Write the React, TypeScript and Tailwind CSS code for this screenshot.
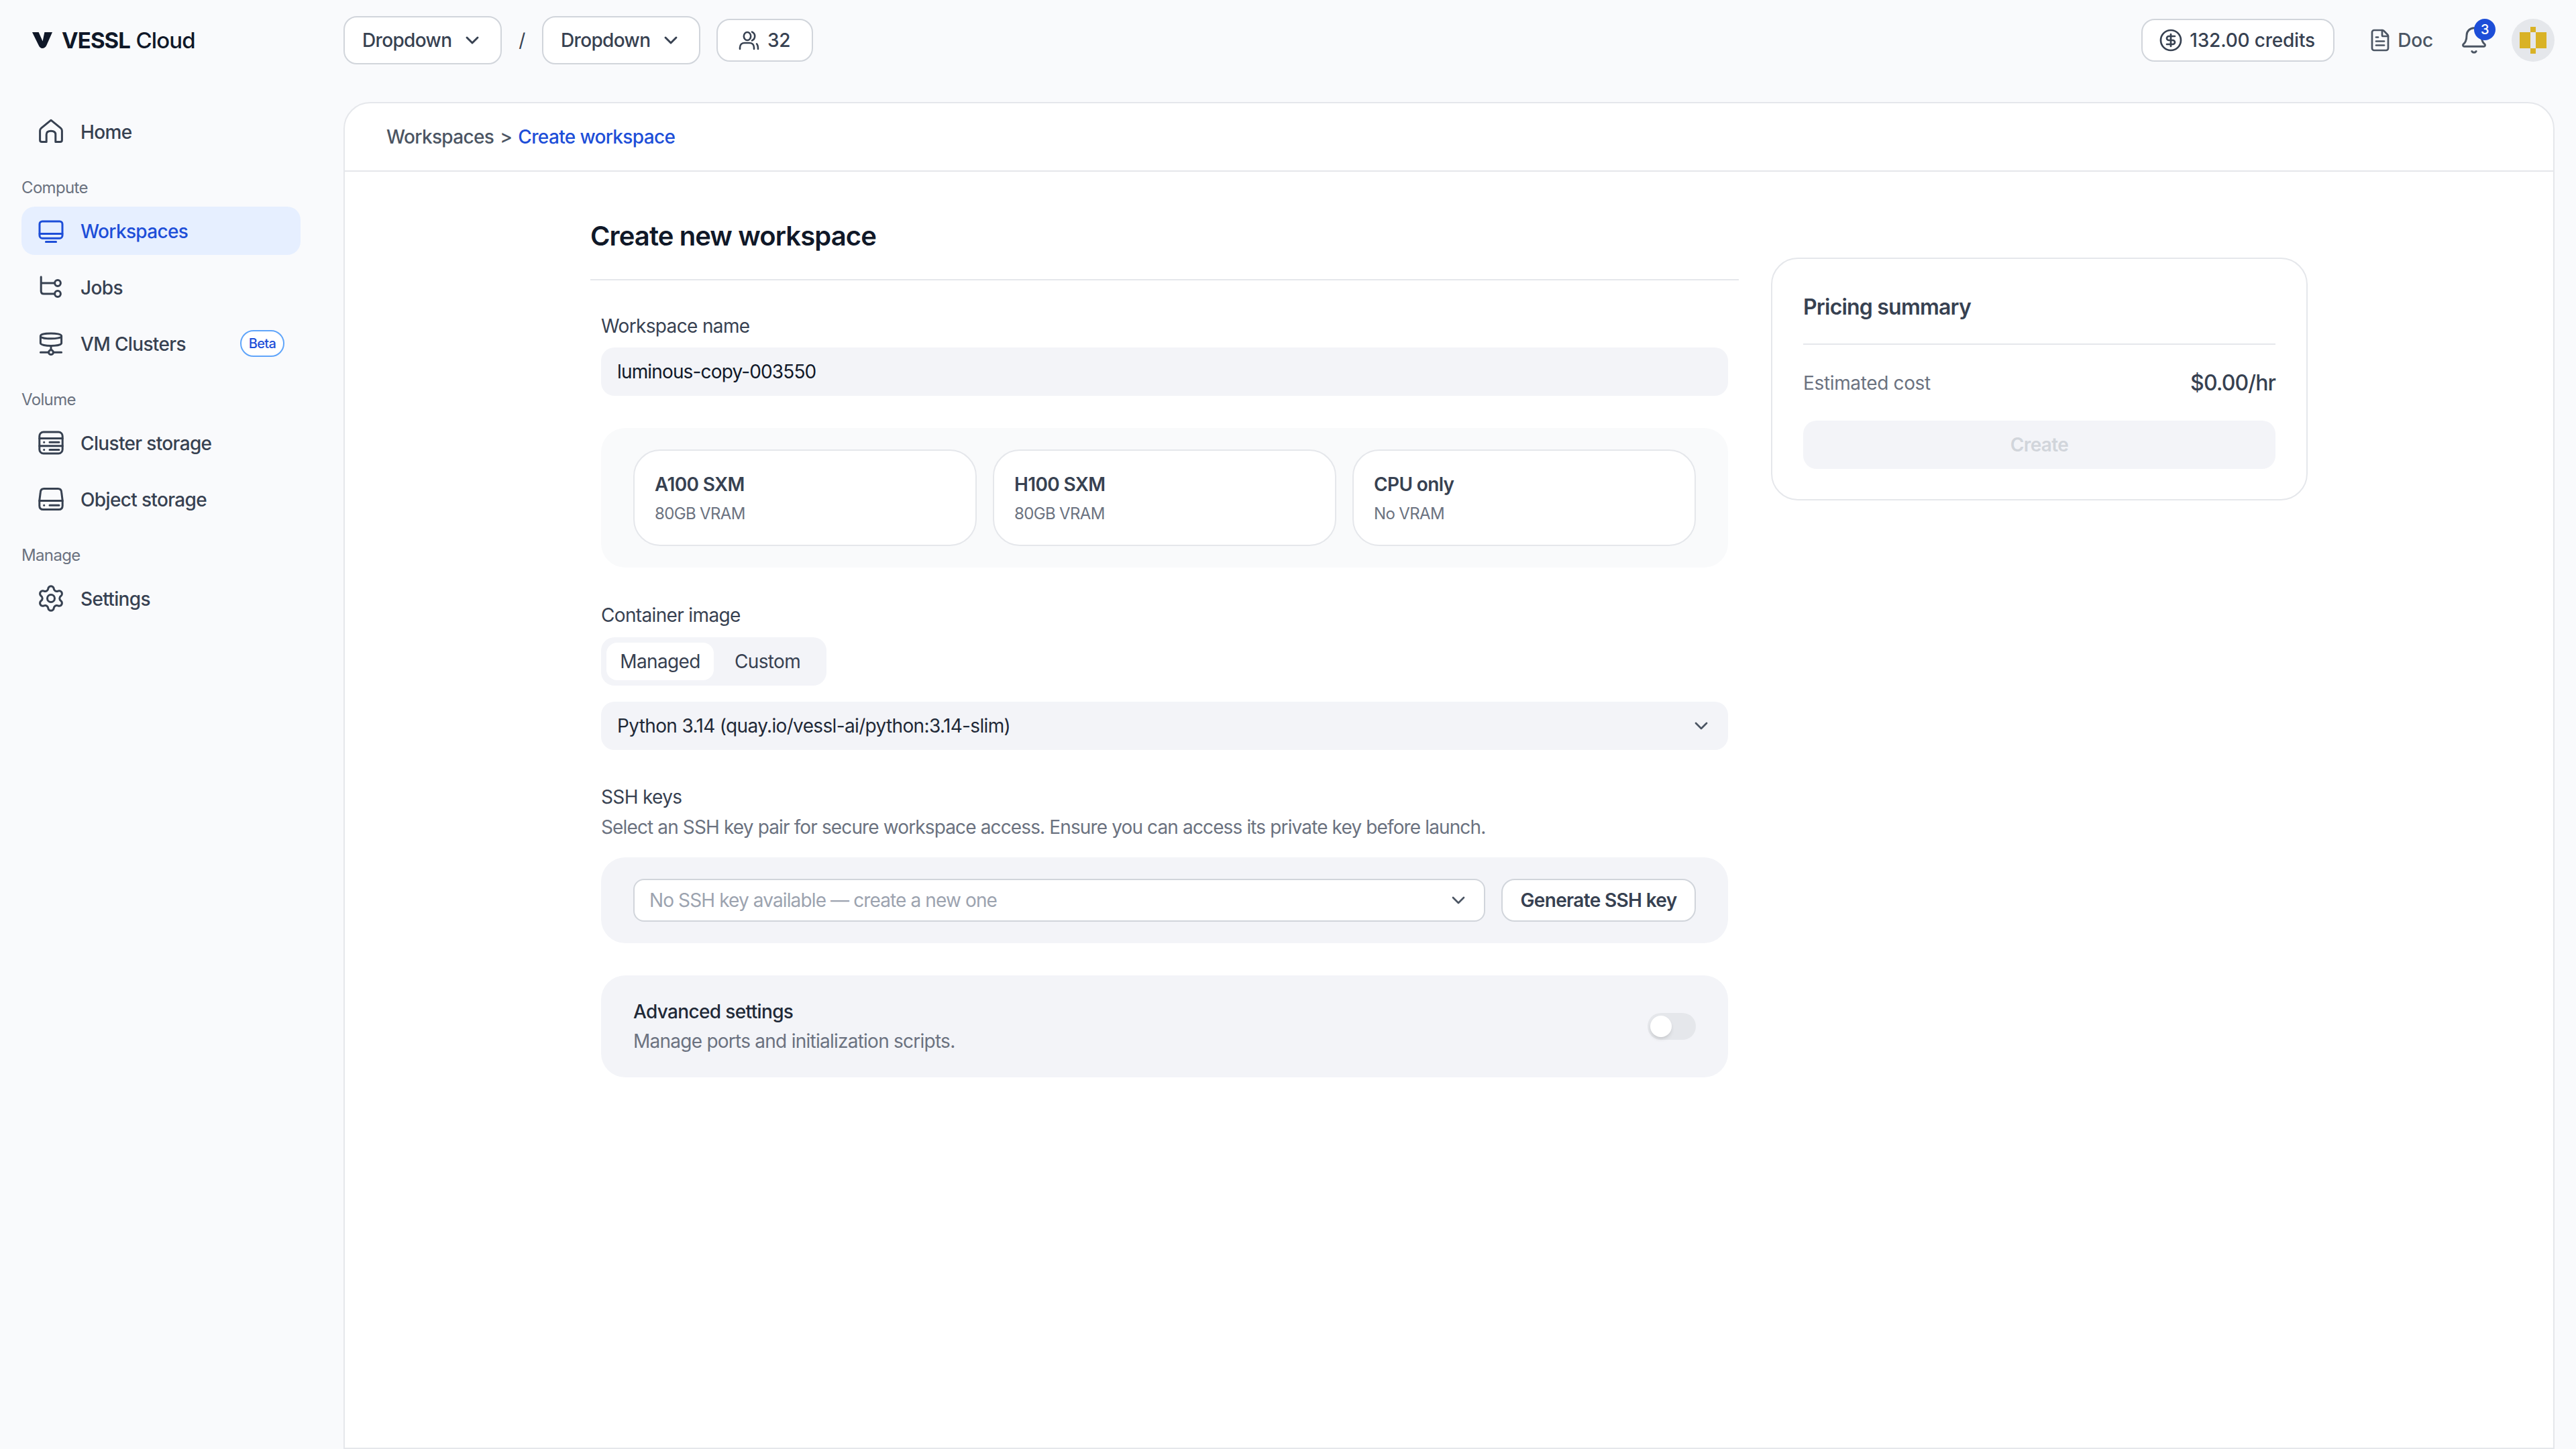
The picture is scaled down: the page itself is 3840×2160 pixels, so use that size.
import { Bell, ChevronDown, CircleDollarSign, FileText, Settings } from "lucide-react";
import type { ReactNode } from "react";

function Line({ children, className = "w-10 h-10" }: { children: ReactNode; className?: string }) {
  return (
    <svg viewBox="0 0 20 20" fill="none" stroke="currentColor" strokeWidth={1.5} strokeLinecap="round" strokeLinejoin="round" className={className + " shrink-0"}>
      {children}
    </svg>
  );
}

const HomeIcon = () => (
  <Line>
    <path d="M10 1.6 L17.2 7.4 Q18.2 8.2 18.2 9.4 V16.4 Q18.2 17.8 16.8 17.8 H13.4 V12.2 Q13.4 9.6 10 9.6 Q6.6 9.6 6.6 12.2 V17.8 H3.2 Q1.8 17.8 1.8 16.4 V9.4 Q1.8 8.2 2.8 7.4 Z" />
  </Line>
);
const MonitorIcon = () => (
  <Line>
    <rect x="1.5" y="3" width="17" height="12.6" rx="2" />
    <path d="M1.5 12.2 H18.5 M6.2 18.2 H13.8" />
  </Line>
);
const JobsIcon = () => (
  <Line>
    <path d="M2.6 2.4 V13 Q2.6 15 4.6 15 H12.8 M2.6 7 H12.8" />
    <circle cx="15" cy="7" r="2.2" />
    <circle cx="15" cy="15" r="2.2" />
  </Line>
);
const ClusterIcon = () => (
  <Line>
    <path d="M2.2 4.4 C2.2 1.8 17.8 1.8 17.8 4.4 V9.8 C17.8 12.4 2.2 12.4 2.2 9.8 Z" />
    <path d="M2.2 4.6 C2.2 7 17.8 7 17.8 4.6" />
    <path d="M10 12 V14.8 M2.2 16.6 H8.2 M11.8 16.6 H17.8" />
    <circle cx="10" cy="16.6" r="1.7" />
  </Line>
);
const ServerIcon = () => (
  <Line>
    <rect x="1.4" y="2" width="17.2" height="16" rx="3" />
    <path d="M1.4 6.8 H18.6 M1.4 12.4 H18.6 M9 9.6 H16 M9 15.2 H16 M4.8 9.6 H4.9 M4.8 15.2 H4.9" />
  </Line>
);
const DriveIcon = () => (
  <Line>
    <path d="M4.8 2.2 H15.2 Q17.6 2.2 17.8 4.6 L18.6 11 V15 Q18.6 17.8 15.8 17.8 H4.2 Q1.4 17.8 1.4 15 V11 L2.2 4.6 Q2.4 2.2 4.8 2.2 Z" />
    <path d="M1.4 11.2 H18.6 M9 14.6 H16 M4.8 14.6 H4.9" />
  </Line>
);
const UsersIcon = () => (
  <svg viewBox="0 0 32 32" fill="none" stroke="currentColor" strokeWidth={2.6} strokeLinecap="round" strokeLinejoin="round" className="w-8 h-8 shrink-0">
    <ellipse cx="14" cy="10" rx="5.2" ry="6" />
    <path d="M3 29 V27 C3 22.5 6 20 10 20 H17 C21 20 24 22.5 24 27 V29" />
    <path d="M21 3.6 C24 5 25.2 7.4 25.2 10 C25.2 12.6 24 15 21 16.4" />
    <path d="M28 21.4 C29.6 23 30 25 30 29" />
  </svg>
);

function Logo() {
  return (
    <div className="flex items-center w-[512px] pl-12 shrink-0">
      <svg viewBox="0 0 30 24" className="w-[30px] h-6 fill-[#101828]">
        <path d="M0 0 H9.6 L15.6 13.4 L18.4 0 H30 L21.4 19.6 Q19.4 24 15 24 Q11.6 24 9.6 19.6 Z" />
      </svg>
      <div className="ml-[14px] text-[33px] leading-10 tracking-[-0.9px] text-[#101828] whitespace-nowrap">
        <span className="font-bold">VESSL</span> <span className="font-medium">Cloud</span>
      </div>
    </div>
  );
}

function Dropdown() {
  return (
    <button className="flex items-center justify-between w-[236px] h-[72px] pl-[26px] pr-[26px] rounded-[20px] border-2 border-[#d1d5db] bg-white text-[28px] font-medium text-[#374151]">
      Dropdown
      <ChevronDown size={32} strokeWidth={2.2} className="text-[#374151]" />
    </button>
  );
}

function Header() {
  return (
    <header className="flex items-center h-[120px] shrink-0">
      <Logo />
      <Dropdown />
      <span className="mx-6 w-3 text-center text-[28px] text-[#374151]">/</span>
      <Dropdown />
      <div className="ml-6 flex items-center gap-[12px] h-16 pl-[30px] pr-8 rounded-[20px] border-2 border-[#d1d5db] bg-white text-[28px] font-medium text-[#374151] tracking-[-0.2px]">
        <UsersIcon />
        32
      </div>
      <div className="ml-auto flex items-center pr-8">
        <div className="flex items-center gap-[10px] h-16 w-[288px] pl-[24px] rounded-[20px] border-2 border-[#d1d5db] bg-white text-[28px] font-medium text-[#374151] tracking-[-0.2px]">
          <CircleDollarSign size={36} strokeWidth={1.8} />
          132.00 credits
        </div>
        <div className="ml-[50px] flex items-center gap-[8px] text-[28px] font-medium text-[#4b5563] tracking-[-0.2px]">
          <FileText size={36} strokeWidth={1.8} />
          Doc
        </div>
        <div className="relative ml-[39px] text-[#4b5563]">
          <Bell size={44} strokeWidth={1.6} />
          <span className="absolute -top-[10px] left-[22px] flex items-center justify-center w-8 h-8 rounded-full bg-[#1d4ed8] text-[20px] font-medium text-white">
            3
          </span>
        </div>
        <div className="ml-[34px] flex items-center justify-center w-16 h-16 rounded-full bg-[#e5e7eb]">
          <svg viewBox="0 0 40 40" className="w-10 h-10 fill-[#d9b226]">
            <path d="M0 8 H16 V32 H0 Z M24 8 H40 V32 H24 Z M16 0 H24 V8 H16 Z M16 32 H24 V40 H16 Z" />
          </svg>
        </div>
      </div>
    </header>
  );
}

function NavItem({ icon, label, active, badge }: { icon: ReactNode; label: string; active?: boolean; badge?: string }) {
  return (
    <div
      className={
        "flex items-center gap-6 h-[72px] px-6 rounded-[20px] text-[28px] font-medium " +
        (active ? "bg-[#e6efff] text-[#1d4ed8]" : "text-[#374151]")
      }
    >
      {icon}
      <span className="translate-y-[1px]">{label}</span>
      {badge && (
        <span className="ml-auto mr-0 flex items-center justify-center w-[66px] h-10 rounded-full border-2 border-[#60a5fa] bg-white text-[20px] font-medium text-[#1d4ed8]">
          {badge}
        </span>
      )}
    </div>
  );
}

function NavLabel({ children }: { children: ReactNode }) {
  return <div className="mt-8 mb-3 h-8 leading-8 text-[24px] text-[#6b7280]">{children}</div>;
}

function Sidebar() {
  return (
    <aside className="w-[512px] shrink-0 pl-8 pr-16 pt-2">
      <NavItem icon={<HomeIcon />} label="Home" />
      <NavLabel>Compute</NavLabel>
      <div className="flex flex-col gap-3">
        <NavItem icon={<MonitorIcon />} label="Workspaces" active />
        <NavItem icon={<JobsIcon />} label="Jobs" />
        <NavItem icon={<ClusterIcon />} label="VM Clusters" badge="Beta" />
      </div>
      <NavLabel>Volume</NavLabel>
      <div className="flex flex-col gap-3">
        <NavItem icon={<ServerIcon />} label="Cluster storage" />
        <NavItem icon={<DriveIcon />} label="Object storage" />
      </div>
      <NavLabel>Manage</NavLabel>
      <NavItem icon={<Settings size={44} strokeWidth={1.65} className="-mx-[2px] shrink-0" />} label="Settings" />
    </aside>
  );
}

function GpuCard({ name, vram }: { name: string; vram: string }) {
  return (
    <div className="h-[144px] rounded-[40px] border-2 border-[#e5e7eb] bg-white px-[30px] pt-[30px]">
      <div className="text-[28px] leading-10 font-semibold text-[#374151]">{name}</div>
      <div className="mt-1 text-[24px] leading-10 text-[#6b7280]">{vram}</div>
    </div>
  );
}

function Form() {
  return (
    <div className="w-[1712px] shrink-0 pt-[68px]">
      <h1 className="h-14 leading-[56px] text-[40px] font-semibold text-[#101828] tracking-[-0.9px]">Create new workspace</h1>
      <div className="mt-9 h-[2px] bg-[#e5e7eb]" />
      <div className="px-4 pt-12">
        <div className="text-[28px] leading-10 text-[#374151]">Workspace name</div>
        <div className="mt-3 flex items-center h-[72px] px-6 rounded-[20px] bg-[#f3f4f8] text-[28px] text-[#101828] tracking-[-0.85px]">luminous-copy-003550</div>

        <div className="mt-12 grid grid-cols-3 gap-6 h-[208px] px-12 py-8 rounded-[36px] bg-[#f9fafb]">
          <GpuCard name="A100 SXM" vram="80GB VRAM" />
          <GpuCard name="H100 SXM" vram="80GB VRAM" />
          <GpuCard name="CPU only" vram="No VRAM" />
        </div>

        <div className="mt-[51px] text-[28px] leading-10 text-[#374151]">Container image</div>
        <div className="mt-[13px] grid grid-cols-2 w-[336px] h-[72px] p-2 rounded-[20px] bg-[#f3f4f8] text-[28px] text-[#374151]">
          <div className="flex items-center justify-center rounded-[16px] bg-white">Managed</div>
          <div className="flex items-center justify-center">Custom</div>
        </div>
        <div className="mt-6 flex items-center justify-between h-[72px] pl-6 pr-6 rounded-[20px] bg-[#f3f4f8] text-[28px] text-[#1f2937]">
          Python 3.14 (quay.io/vessl-ai/python:3.14-slim)
          <ChevronDown size={32} strokeWidth={2} className="text-[#4b5563]" />
        </div>

        <div className="mt-[50px] text-[28px] leading-10 text-[#374151]">SSH keys</div>
        <div className="mt-[5px] text-[28px] leading-10 text-[#6b7280] tracking-[-0.87px]">
          Select an SSH key pair for secure workspace access. Ensure you can access its private key before launch.
        </div>
        <div className="mt-[25px] flex items-center gap-6 h-[128px] px-12 rounded-[36px] bg-[#f3f4f8]">
          <div className="flex-1 flex items-center justify-between h-16 pl-[22px] pr-[22px] rounded-[16px] border-2 border-[#d1d5db] bg-white text-[28px] text-[#9ca3af] tracking-[-0.88px]">
            No SSH key available — create a new one
            <ChevronDown size={32} strokeWidth={2} className="text-[#4b5563]" />
          </div>
          <button className="h-16 w-[290px] rounded-[20px] border-2 border-[#d1d5db] bg-white text-[28px] font-semibold text-[#374151]">
            Generate SSH key
          </button>
        </div>

        <div className="mt-12 flex items-center justify-between h-[152px] px-12 rounded-[36px] bg-[#f3f4f8]">
          <div>
            <div className="text-[28px] leading-10 font-medium text-[#1f2937]">Advanced settings</div>
            <div className="mt-1 text-[28px] leading-10 text-[#6b7280] tracking-[-0.75px]">Manage ports and initialization scripts.</div>
          </div>
          <div className="flex items-center w-[72px] h-10 p-1 rounded-full bg-[#e5e7eb]">
            <div className="w-8 h-8 rounded-full bg-white shadow-md" />
          </div>
        </div>
      </div>
    </div>
  );
}

function Pricing() {
  return (
    <div className="w-[800px] shrink-0 pt-[128px]">
      <div className="h-[362px] rounded-[40px] border-2 border-[#e5e7eb] bg-white px-[46px] pt-[48px]">
        <div className="h-12 leading-[48px] text-[32px] font-semibold text-[#374151] tracking-[-0.8px]">Pricing summary</div>
        <div className="mt-[30px] h-[2px] bg-[#e5e7eb]" />
        <div className="mt-[33px] flex items-center justify-between h-12">
          <span className="text-[28px] text-[#6b7280] tracking-[-0.35px]">Estimated cost</span>
          <span className="text-[32px] font-medium text-[#374151] tracking-[-0.9px]">$0.00/hr</span>
        </div>
        <button className="mt-[32px] w-full h-[72px] rounded-[20px] bg-[#f3f4f8] text-[28px] font-semibold text-[#d1d5db]">Create</button>
      </div>
    </div>
  );
}

export default function App() {
  return (
    <div className="flex flex-col w-[3840px] h-[2160px] bg-[#f9fafc] font-['Inter',sans-serif] tracking-[-0.65px] overflow-hidden">
      <Header />
      <div className="flex flex-1 mt-8 pr-8">
        <Sidebar />
        <main className="flex-1 flex flex-col rounded-t-[40px] border-2 border-[#e5e7eb] bg-white">
          <div className="flex items-center gap-[9px] h-[102px] px-[62px] border-b-2 border-[#e5e7eb] shrink-0 text-[28px] font-medium text-[#4b5563]">
            <span>Workspaces</span>
            <span>&gt;</span>
            <span className="text-[#1d4ed8]">Create workspace</span>
          </div>
          <div className="flex justify-center gap-12">
            <Form />
            <Pricing />
          </div>
        </main>
      </div>
    </div>
  );
}
